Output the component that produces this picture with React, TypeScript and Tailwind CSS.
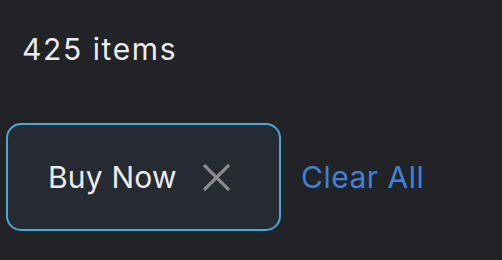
export default function App() {
  return (
    <div
      className="w-[502px] h-[260px] bg-[#222327] text-[#ececee] overflow-hidden"
      style={{ fontFamily: '"Inter", "Noto Sans", sans-serif' }}
    >
      <div className="pl-[22px] pt-[29px] text-[30px] leading-[40px] tracking-[1.6px]">425 items</div>
      <div className="flex items-center mt-[54px] pl-[6px] gap-[20px]">
        <div className="flex items-center w-[275px] h-[108px] rounded-[15px] border-2 border-[#4aa8d8] bg-[#252b31] pl-[40px] gap-[26px]">
          <span className="text-[30px] leading-none tracking-[0.2px]">Buy Now</span>
          <svg width="27" height="27" viewBox="0 0 27 27" className="text-[#8a8d90]">
            <path d="M1 1L26 26M26 1L1 26" stroke="currentColor" strokeWidth="3.2" />
          </svg>
        </div>
        <button className="text-[30px] leading-none tracking-[0.5px] text-[#3f82d6]">Clear All</button>
      </div>
    </div>
  );
}
